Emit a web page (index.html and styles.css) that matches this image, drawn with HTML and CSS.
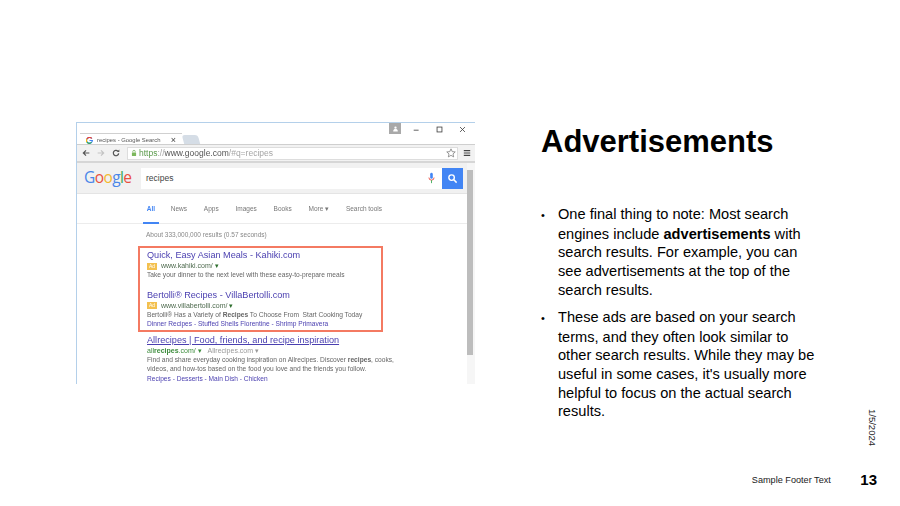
FILE: index.html
```html
<!DOCTYPE html>
<html lang="en">
<head>
  <meta charset="UTF-8" />
  <title>Advertisements</title>
  <link rel="stylesheet" href="styles.css">
</head>
<body>
<div class="slide">
  <div class="left">
    <div class="shot">
      <div class="tabstrip">
        <div class="tab">
          <svg class="favicon" viewBox="0 0 12 12"><path d="M10 2.600A5 5 0 1 0 11 6H6" fill="none" stroke="#4285f4" stroke-width="2"/><path d="M10 2.600A5 5 0 0 0 1.500 3.500" fill="none" stroke="#ea4335" stroke-width="2"/><path d="M1.500 3.500a5 5 0 0 0 0 5" fill="none" stroke="#fbbc05" stroke-width="2"/><path d="M1.500 8.500a5 5 0 0 0 8 .8" fill="none" stroke="#34a853" stroke-width="2"/></svg>
          <span class="tab-title">recipes - Google Search</span>
          <span class="tab-x">×</span>
        </div>
        <div class="newtab"></div>
        <div class="spacer"></div>
        <div class="user">
          <svg viewBox="0 0 12 12"><circle cx="6" cy="4.500" r="2" fill="#fff"/><path d="M2 11c0-3 2-4 4-4s4 1 4 4z" fill="#fff"/></svg>
        </div>
        <svg class="winbtn" viewBox="0 0 10 10"><path d="M1 6h7" stroke="#444" stroke-width="1.200"/></svg>
        <svg class="winbtn" viewBox="0 0 10 10"><rect x="1.500" y="1.500" width="7" height="7" fill="none" stroke="#444" stroke-width="1.200"/></svg>
        <svg class="winbtn" viewBox="0 0 10 10"><path d="M1.500 1.500l7 7M8.500 1.500l-7 7" stroke="#444" stroke-width="1.200"/></svg>
      </div>
      <div class="toolbar">
        <svg class="nav" viewBox="0 0 12 12"><path d="M11 6H2M6 2L2 6l4 4" fill="none" stroke="#555" stroke-width="1.800"/></svg>
        <svg class="nav" viewBox="0 0 12 12"><path d="M1 6h9M6 2l4 4-4 4" fill="none" stroke="#c4c4c4" stroke-width="1.800"/></svg>
        <svg class="nav" viewBox="0 0 12 12"><path d="M10 6.500A4 4 0 1 1 8.800 3.200" fill="none" stroke="#555" stroke-width="1.800"/><path d="M7 4.500h4V0.800z" fill="#555"/></svg>
        <div class="omnibox">
          <svg class="lock" viewBox="0 0 10 12"><path d="M3 5V3.500a2 2 0 0 1 4 0V5" fill="none" stroke="#6aa84f" stroke-width="1.200"/><rect x="1.500" y="5" width="7" height="6" rx="1" fill="#7cb85c"/></svg>
          <span class="url"><span class="https">https</span><span class="scheme">://</span>www.google.com<span class="scheme">/#q=recipes</span></span>
          <svg class="star" viewBox="0 0 12 12"><path d="M6 1l1.500 3.400 3.600.3-2.700 2.400.8 3.600L6 8.800l-3.200 1.900.8-3.600L.9 4.700l3.600-.3z" fill="none" stroke="#777" stroke-width=".9"/></svg>
        </div>
        <svg class="hamburger" viewBox="0 0 10 10"><path d="M1 2h8M1 5h8M1 8h8" stroke="#444" stroke-width="1.500"/></svg>
      </div>
      <div class="page">
        <div class="content">
          <div class="searchhead">
            <div class="logo"><span class="g-blue">G</span><span class="g-red">o</span><span class="g-yellow">o</span><span class="g-blue">g</span><span class="g-green">l</span><span class="g-red">e</span></div>
            <div class="searchbox">
              <span class="query">recipes</span>
              <svg class="mic" viewBox="0 0 8 14"><rect x="2.500" y="1" width="3" height="7" rx="1.500" fill="#4285f4"/><path d="M1 6.500a3 3 0 0 0 6 0" fill="none" stroke="#ea4335"/><path d="M4 9.500V13" stroke="#34a853"/></svg>
              <div class="searchbtn">
                <svg viewBox="0 0 12 12"><circle cx="5" cy="5" r="3" fill="none" stroke="#fff" stroke-width="1.500"/><path d="M7.200 7.200L10.500 10.500" stroke="#fff" stroke-width="1.600"/></svg>
              </div>
            </div>
          </div>
          <div class="gtabs">
            <span class="gtab active">All</span>
            <span class="gtab">News</span>
            <span class="gtab">Apps</span>
            <span class="gtab">Images</span>
            <span class="gtab">Books</span>
            <span class="gtab">More ▾</span>
            <span class="gtab">Search tools</span>
          </div>
          <div class="results">
            <div class="stats">About 333,000,000 results (0.57 seconds)</div>
            <div class="adbox">
              <div class="result">
                <div class="r-title">Quick, Easy Asian Meals - Kahiki.com</div>
                <div class="r-url"><span class="ad">Ad</span>www.kahiki.com/ <span class="caret">▾</span></div>
                <div class="r-desc">Take your dinner to the next level with these easy-to-prepare meals</div>
              </div>
              <div class="result">
                <div class="r-title">Bertolli® Recipes - VillaBertolli.com</div>
                <div class="r-url"><span class="ad">Ad</span>www.villabertolli.com/ <span class="caret">▾</span></div>
                <div class="r-desc">Bertolli® Has a Variety of <b>Recipes</b> To Choose From&nbsp; Start Cooking Today</div>
                <div class="r-links">Dinner Recipes - Stuffed Shells Florentine - Shrimp Primavera</div>
              </div>
            </div>
            <div class="organic">
              <div class="r-title under">Allrecipes | Food, friends, and recipe inspiration</div>
              <div class="r-url green">all<b>recipes</b>.com/ ▾ <span class="gray">Allrecipes.com ▾</span></div>
              <div class="r-desc">Find and share everyday cooking inspiration on Allrecipes. Discover <b>recipes</b>, cooks,<br>videos, and how-tos based on the food you love and the friends you follow.</div>
              <div class="r-links">Recipes - Desserts - Main Dish - Chicken</div>
            </div>
          </div>
        </div>
        <div class="scrollbar"><div class="thumb"></div></div>
      </div>
    </div>
  </div>
  <div class="right">
    <h1>Advertisements</h1>
    <ul>
      <li>One final thing to note: Most search engines include <b>advertisements</b> with search results. For example, you can see advertisements at the top of the search results.</li>
      <li>These ads are based on your search terms, and they often look similar to other search results. While they may be useful in some cases, it's usually more helpful to focus on the actual search results.</li>
    </ul>
  </div>
  <div class="date">1/5/2024</div>
  <footer>
    <span class="foot-text">Sample Footer Text</span>
    <span class="page-num">13</span>
  </footer>
</div>
</body>
</html>
```

FILE: styles.css
```css
* {
  box-sizing: border-box;
}
body {
  margin: 0;
  background: #fff;
  color: #000;
  font-family: "Liberation Sans", Arial, sans-serif;
}
.slide {
  position: relative;
  width: 900px;
  height: 506px;
  overflow: hidden;
  display: grid;
  grid-template-columns: 541px 1fr;
  grid-template-rows: 1fr auto;
}

/* left: browser screenshot */
.left {
  padding: 122px 0 0 76px;
}
.shot {
  width: 399px;
  height: 262px;
  display: flex;
  flex-direction: column;
  border-top: 1px solid #b4d0ea;
  border-left: 1px solid #b4d0ea;
  overflow: hidden;
  filter: blur(0.45px);
  color: #555;
}
.tabstrip {
  height: 21px;
  flex: none;
  display: flex;
  align-items: flex-start;
  padding: 0 9px 0 3px;
}
.tab {
  width: 102px;
  height: 13px;
  margin-top: 10px;
  display: flex;
  align-items: center;
  gap: 4px;
  padding: 0 6px;
  font-size: 5.900px;
  white-space: nowrap;
  color: #555;
  border-top: 1px solid #d0d0d0;
}
.favicon {
  width: 7px;
  height: 7px;
  flex: none;
}
.tab-title {
  flex: 1;
}
.tab-x {
  font-size: 9px;
  color: #444;
}
.newtab {
  width: 16px;
  height: 9px;
  margin: 12px 0 0 1px;
  background: #d5dde6;
  border-radius: 3px 3px 0 0;
  transform: skewX(15deg);
}
.spacer {
  flex: 1;
}
.user {
  width: 12px;
  height: 11px;
  background: #a9a9a9;
  margin-right: 12px;
  display: flex;
  justify-content: center;
  align-items: center;
}
.user svg {
  width: 7px;
  height: 7px;
}
.winbtn {
  width: 7px;
  height: 7px;
  margin: 3px 16px 0 0;
}
.winbtn:last-child {
  margin-right: 0;
}
.toolbar {
  height: 19px;
  flex: none;
  display: flex;
  align-items: center;
  gap: 7px;
  padding: 0 4px 0 5px;
  background: #f2f2f2;
  border-top: 1px solid #cfcfcf;
  border-bottom: 2px solid #d6d6d6;
}
.nav {
  width: 8px;
  height: 8px;
  flex: none;
}
.omnibox {
  flex: 1;
  height: 13px;
  display: flex;
  align-items: center;
  gap: 2px;
  padding: 0 1px 0 3px;
  margin-right: -2px;
  background: #fff;
  border: 1px solid #ddd;
}
.lock {
  width: 6px;
  height: 8px;
  flex: none;
}
.url {
  flex: 1;
  font-size: 8.500px;
  color: #555;
}
.https {
  color: #5b9a4b;
}
.scheme {
  color: #a5a5a5;
}
.star {
  width: 10px;
  height: 10px;
}
.hamburger {
  width: 8px;
  height: 8px;
  flex: none;
}
.page {
  flex: 1;
  min-height: 0;
  display: flex;
}
.content {
  flex: 1;
  min-width: 0;
}
.scrollbar {
  width: 8px;
  flex: none;
  padding-top: 7px;
  background: #f6f6f6;
}
.thumb {
  height: 185px;
  width: 6px;
  background: #bdbdbd;
}
.searchhead {
  height: 31px;
  display: flex;
  align-items: center;
  background: #f1f1f1;
  border-bottom: 1px solid #e4e4e4;
  padding-left: 7px;
}
.logo {
  width: 57px;
  padding-bottom: 2px;
  font-size: 15.500px;
  font-family: "Open Sans", sans-serif;
  letter-spacing: -0.6px;
}
.g-blue { color: #4a86e8; }
.g-red { color: #e8503f; }
.g-yellow { color: #f4b92f; }
.g-green { color: #3aa757; }
.searchbox {
  width: 322px;
  height: 21px;
  display: flex;
  align-items: center;
  background: #fff;
  padding-left: 5px;
}
.query {
  flex: 1;
  font-size: 8.500px;
  color: #444;
}
.mic {
  width: 7px;
  height: 12px;
  margin-right: 7px;
}
.searchbtn {
  width: 21px;
  height: 21px;
  background: #4285f4;
  display: flex;
  align-items: center;
  justify-content: center;
}
.searchbtn svg {
  width: 11px;
  height: 11px;
}
.gtabs {
  height: 30px;
  display: flex;
  gap: 16.800px;
  padding: 11px 0 0 66px;
  margin-bottom: 7px;
  border-bottom: 1px solid #ececec;
  font-size: 6.500px;
  color: #777;
}
.gtab.active {
  height: 19px;
  width: 16px;
  margin-right: -5px;
  color: #4285f4;
  font-weight: bold;
  border-bottom: 2px solid #4285f4;
  text-align: center;
}
.results {
  padding-left: 61px;
  width: 320px;
}
.stats {
  padding-left: 8px;
  font-size: 6.500px;
  color: #888;
  margin-bottom: 8px;
}
.adbox {
  width: 245px;
  height: 86px;
  border: 2px solid #f47a62;
  padding: 1px 0 0 7px;
  margin-bottom: 2px;
}
.result {
  margin-bottom: 9.400px;
}
.r-title {
  font-size: 9.150px;
  line-height: 12px;
  color: #4a3fb0;
  white-space: nowrap;
}
.r-title.under {
  text-decoration: underline;
}
.r-url {
  font-size: 7px;
  line-height: 9px;
  color: #4f6b4f;
  white-space: nowrap;
}
.r-url.green {
  color: #3c8c3c;
}
.gray {
  margin-left: 4px;
  color: #999;
}
.caret {
  color: #2c6e2c;
}
.ad {
  display: inline-block;
  width: 10px;
  height: 7px;
  line-height: 7px;
  margin-right: 4px;
  background: #f3c04f;
  color: #fff;
  font-size: 5px;
  text-align: center;
  vertical-align: middle;
}
.r-desc {
  font-size: 6.650px;
  line-height: 9.300px;
  color: #666;
  white-space: nowrap;
}
.r-links {
  font-size: 6.600px;
  line-height: 9.300px;
  color: #4a3fb0;
  white-space: nowrap;
}
.organic {
  padding-left: 9px;
}

/* right: text */
.right {
  padding-top: 123px;
}
h1 {
  margin: 0 0 44px;
  font-size: 31px;
  line-height: 38px;
  font-weight: bold;
}
ul {
  margin: 0;
  padding: 0;
  width: 280px;
  list-style: none;
  font-size: 14.600px;
  line-height: 18.700px;
}
li {
  padding-left: 17px;
  text-indent: -17px;
  margin-bottom: 8.300px;
}
li::before {
  content: "•";
  display: inline-block;
  width: 17px;
  text-indent: 0;
  font-size: 11px;
}
.date {
  position: absolute;
  left: 867px;
  top: 409px;
  font-size: 9.500px;
  line-height: 11px;
  writing-mode: vertical-rl;
  color: #222;
}
footer {
  grid-column: 1 / -1;
  display: flex;
  justify-content: flex-end;
  align-items: center;
  gap: 29.500px;
  padding: 0 23px 17px 0;
}
.foot-text {
  font-size: 9.150px;
  color: #222;
}
.page-num {
  font-size: 15px;
  line-height: 18px;
  font-weight: bold;
}
```
